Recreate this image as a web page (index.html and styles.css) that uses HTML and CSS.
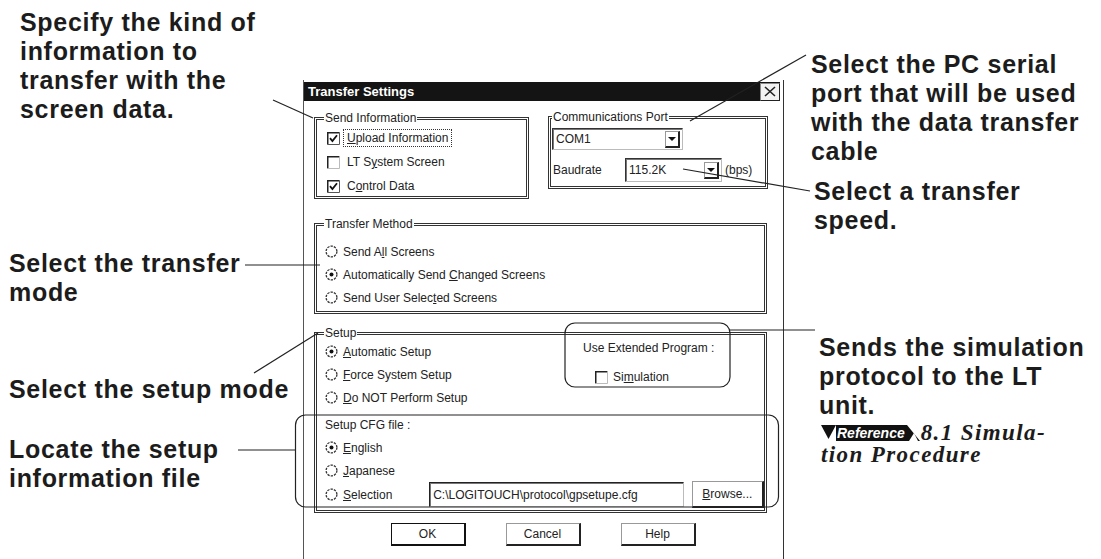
FILE: index.html
```html
<!DOCTYPE html>
<html>
<head>
<meta charset="utf-8">
<link rel="stylesheet" href="styles.css">
</head>
<body>
<div class="figure">
  <div class="col-left">
    <p class="note n-specify">Specify the kind of<br>information to<br>transfer with the<br>screen data.</p>
    <p class="note n-transfer">Select the transfer<br>mode</p>
    <p class="note n-setup">Select the setup mode</p>
    <p class="note n-locate">Locate the setup<br>information file</p>
  </div>

  <div class="dialog">
    <div class="titlebar">
      <span class="title">Transfer Settings</span>
      <span class="close"><svg width="12" height="11" viewBox="0 0 12 11"><path d="M1 1 L11 10 M11 1 L1 10" stroke="#222" stroke-width="1.6"/></svg></span>
    </div>
    <div class="dlg-body">
      <div class="row1">
        <fieldset class="grp grp-send">
          <legend>Send Information</legend>
          <div class="opt cbopt"><span class="cb"><svg width="13" height="13" viewBox="0 0 13 13"><path d="M0.75 12.5 V0.75 H12.5" fill="none" stroke="#222" stroke-width="1.5"/><path d="M12.5 0.5 V12.5 H0.5" fill="none" stroke="#555" stroke-width="1"/><path d="M3 6.2 L5.4 9 L10 3.2" fill="none" stroke="#111" stroke-width="1.8"/></svg></span><span class="lbl focus"><u>U</u>pload Information</span></div>
          <div class="opt cbopt"><span class="cb"><svg width="13" height="13" viewBox="0 0 13 13"><path d="M0.75 12.5 V0.75 H12.5" fill="none" stroke="#222" stroke-width="1.5"/><path d="M12.5 0.5 V12.5 H0.5" fill="none" stroke="#bbb" stroke-width="1"/></svg></span><span class="lbl">LT S<u>y</u>stem Screen</span></div>
          <div class="opt cbopt"><span class="cb"><svg width="13" height="13" viewBox="0 0 13 13"><path d="M0.75 12.5 V0.75 H12.5" fill="none" stroke="#222" stroke-width="1.5"/><path d="M12.5 0.5 V12.5 H0.5" fill="none" stroke="#555" stroke-width="1"/><path d="M3 6.2 L5.4 9 L10 3.2" fill="none" stroke="#111" stroke-width="1.8"/></svg></span><span class="lbl">C<u>o</u>ntrol Data</span></div>
        </fieldset>
        <fieldset class="grp grp-port">
          <legend>Communications Port</legend>
          <div class="combo combo-com"><span class="val">COM1</span><span class="drop"></span></div>
          <div class="baud">
            <span class="baud-label">Baudrate</span>
            <div class="combo combo-baud"><span class="val">115.2K</span><span class="drop"></span></div>
            <span class="bps">(bps)</span>
          </div>
        </fieldset>
      </div>

      <fieldset class="grp grp-method">
        <legend>Transfer Method</legend>
        <div class="opt ropt"><svg class="rd" width="13" height="13" viewBox="0 0 13 13"><circle cx="6.5" cy="6.5" r="5.4" fill="none" stroke="#333" stroke-width="1.3" stroke-dasharray="2.3 1.1"/></svg><span class="lbl">Send A<u>l</u>l Screens</span></div>
        <div class="opt ropt"><svg class="rd" width="13" height="13" viewBox="0 0 13 13"><circle cx="6.5" cy="6.5" r="5.4" fill="none" stroke="#333" stroke-width="1.3" stroke-dasharray="2.3 1.1"/><circle cx="6.5" cy="6.5" r="2" fill="#111"/></svg><span class="lbl">Automatically Send <u>C</u>hanged Screens</span></div>
        <div class="opt ropt"><svg class="rd" width="13" height="13" viewBox="0 0 13 13"><circle cx="6.5" cy="6.5" r="5.4" fill="none" stroke="#333" stroke-width="1.3" stroke-dasharray="2.3 1.1"/></svg><span class="lbl">Send User Selec<u>t</u>ed Screens</span></div>
      </fieldset>

      <fieldset class="grp grp-setup">
        <legend>Setup</legend>
        <div class="setup-top">
          <div class="setup-modes">
            <div class="opt ropt"><svg class="rd" width="13" height="13" viewBox="0 0 13 13"><circle cx="6.5" cy="6.5" r="5.4" fill="none" stroke="#333" stroke-width="1.3" stroke-dasharray="2.3 1.1"/><circle cx="6.5" cy="6.5" r="2" fill="#111"/></svg><span class="lbl"><u>A</u>utomatic Setup</span></div>
            <div class="opt ropt"><svg class="rd" width="13" height="13" viewBox="0 0 13 13"><circle cx="6.5" cy="6.5" r="5.4" fill="none" stroke="#333" stroke-width="1.3" stroke-dasharray="2.3 1.1"/></svg><span class="lbl"><u>F</u>orce System Setup</span></div>
            <div class="opt ropt"><svg class="rd" width="13" height="13" viewBox="0 0 13 13"><circle cx="6.5" cy="6.5" r="5.4" fill="none" stroke="#333" stroke-width="1.3" stroke-dasharray="2.3 1.1"/></svg><span class="lbl"><u>D</u>o NOT Perform Setup</span></div>
          </div>
          <div class="ext">
            <div class="ext-title">Use Extended Program :</div>
            <div class="ext-sim"><span class="cb"><svg width="13" height="13" viewBox="0 0 13 13"><path d="M0.75 12.5 V0.75 H12.5" fill="none" stroke="#222" stroke-width="1.5"/><path d="M12.5 0.5 V12.5 H0.5" fill="none" stroke="#bbb" stroke-width="1"/></svg></span><span class="lbl">Si<u>m</u>ulation</span></div>
          </div>
        </div>
        <div class="cfg-label">Setup CFG file :</div>
        <div class="opt ropt"><svg class="rd" width="13" height="13" viewBox="0 0 13 13"><circle cx="6.5" cy="6.5" r="5.4" fill="none" stroke="#333" stroke-width="1.3" stroke-dasharray="2.3 1.1"/><circle cx="6.5" cy="6.5" r="2" fill="#111"/></svg><span class="lbl"><u>E</u>nglish</span></div>
        <div class="opt ropt"><svg class="rd" width="13" height="13" viewBox="0 0 13 13"><circle cx="6.5" cy="6.5" r="5.4" fill="none" stroke="#333" stroke-width="1.3" stroke-dasharray="2.3 1.1"/></svg><span class="lbl"><u>J</u>apanese</span></div>
        <div class="opt ropt sel-row"><svg class="rd" width="13" height="13" viewBox="0 0 13 13"><circle cx="6.5" cy="6.5" r="5.4" fill="none" stroke="#333" stroke-width="1.3" stroke-dasharray="2.3 1.1"/></svg><span class="lbl sel-lbl"><u>S</u>election</span><span class="field">C:\LOGITOUCH\protocol\gpsetupe.cfg</span><span class="btn btn-browse"><u>B</u>rowse...</span></div>
      </fieldset>

      <div class="buttons">
        <span class="btn btn-default">OK</span>
        <span class="btn">Cancel</span>
        <span class="btn">Help</span>
      </div>
    </div>
  </div>

  <div class="col-right">
    <p class="note n-port">Select the PC serial<br>port that will be used<br>with the data transfer<br>cable</p>
    <p class="note n-speed">Select a transfer<br>speed.</p>
    <p class="note n-sim">Sends the simulation<br>protocol to the LT<br>unit.</p>
    <div class="ref">
      <div class="ref-line">
        <span class="badge"><svg class="badge-l" width="15" height="16" viewBox="0 0 15 16"><polygon points="0,0 15,0 7.5,14" fill="#111"/></svg><span class="badge-mid">Reference</span><svg class="badge-r" width="13" height="16" viewBox="0 0 13 16"><polygon points="0,0 0,16 13,16" fill="#111"/><polygon points="2,16 7,8 11,16" fill="#fff"/></svg></span><span class="ref-text">8.1 Simula-</span>
      </div>
      <div class="ref-text ref-line2">tion Procedure</div>
    </div>
  </div>

  <svg class="leaders" width="1101" height="559" viewBox="0 0 1101 559">
    <g stroke="#222" stroke-width="1.2" fill="none">
      <line x1="273" y1="100" x2="313" y2="118"/>
      <line x1="690" y1="121" x2="806" y2="55"/>
      <line x1="683" y1="169" x2="810" y2="191"/>
      <line x1="245" y1="265" x2="320" y2="265"/>
      <line x1="254" y1="373" x2="318" y2="333"/>
      <line x1="238" y1="450" x2="295" y2="450"/>
      <line x1="730" y1="330" x2="815" y2="330"/>
      <rect x="565" y="323" width="165" height="64" rx="10" ry="10"/>
      <rect x="295.5" y="415" width="483" height="92" rx="10" ry="10"/>
    </g>
  </svg>
</div>
</body>
</html>
```

FILE: styles.css
```css
* { box-sizing: border-box; }

body {
  margin: 0;
  background: #fff;
}

.figure {
  position: relative;
  width: 1101px;
  height: 559px;
  overflow: hidden;
  display: grid;
  grid-template-columns: 303px 481px 317px;
  font-family: "Liberation Sans", Arial, sans-serif;
  color: #1c1c1c;
}

/* ---------- annotations ---------- */
.note {
  margin: 0;
  font-weight: bold;
  font-size: 25px;
  line-height: 29px;
  letter-spacing: 0.7px;
  white-space: nowrap;
}

.col-left,
.col-right {
  display: flex;
  flex-direction: column;
}

.n-specify { margin-top: 8px; padding-left: 20px; }
.n-transfer { margin-top: 125px; padding-left: 9px; }
.n-setup { margin-top: 68px; padding-left: 9px; }
.n-locate { margin-top: 31px; padding-left: 9px; }

.n-port { margin-top: 50px; padding-left: 27px; }
.n-speed { margin-top: 11px; padding-left: 30px; }
.n-sim { margin-top: 98px; padding-left: 35px; }

.ref {
  margin-top: 4px;
  padding-left: 37px;
}

.ref-line {
  display: flex;
  align-items: center;
  height: 18px;
}

.badge {
  display: inline-flex;
  height: 16px;
  margin-right: 1px;
}

.badge-mid {
  background: #111;
  color: #fff;
  font-style: italic;
  font-weight: bold;
  font-size: 14px;
  line-height: 16px;
  padding: 0 2px 0 1px;
}

.ref-text {
  font-family: "Liberation Serif", "Times New Roman", serif;
  font-style: italic;
  font-weight: bold;
  font-size: 23px;
  letter-spacing: 1.4px;
  line-height: 18px;
  white-space: nowrap;
}

.ref-line2 {
  margin-top: 4px;
}

/* ---------- dialog ---------- */
.dialog {
  margin-top: 80px;
  height: 479px;
  border-left: 1px solid #555;
  border-right: 1px solid #333;
  font-size: 12px;
  color: #222;
}

.titlebar {
  height: 19px;
  margin: 2px 3px 0 0;
  background: #141414;
  color: #fff;
  font-weight: bold;
  font-size: 13px;
  display: flex;
  align-items: center;
  justify-content: space-between;
  padding-left: 4px;
}

.close {
  width: 20px;
  height: 18px;
  background: #f2f2f2;
  border: 1px solid #888;
  border-right-color: #222;
  border-bottom-color: #222;
  display: flex;
  align-items: center;
  justify-content: center;
}

.dlg-body {
  padding: 0 15px 0 10px;
}

.row1 {
  display: flex;
  gap: 19px;
  align-items: flex-start;
  margin-top: 9px;
}

.grp {
  margin: 0;
  min-width: 0;
  border: 3px double #333;
  padding: 0;
}

.grp legend {
  padding: 0 1px;
  font-size: 12px;
  line-height: 14px;
}

.grp-send {
  width: 215px;
  height: 88px;
  margin-top: 1px;
  padding: 1px 0 0 7px;
}

.grp-port {
  width: 220px;
  height: 79px;
  padding: 4px 0 0 1px;
}

.grp-method {
  width: 453px;
  height: 97px;
  margin-top: 18px;
  padding: 9px 0 0 7px;
}

.grp-setup {
  width: 453px;
  height: 187px;
  margin-top: 12px;
  padding: 0 0 0 7px;
}

.opt {
  display: flex;
  align-items: center;
  height: 23px;
  white-space: nowrap;
}

.cbopt {
  height: 24px;
  padding-left: 3px;
  gap: 5px;
}

.cbopt .lbl {
  padding: 0 2px;
}

.ropt {
  padding-left: 1px;
  gap: 5px;
}

.cb {
  display: inline-flex;
  width: 13px;
  height: 13px;
}

.rd {
  flex: none;
}

.focus {
  outline: 1px dotted #333;
  outline-offset: 1px;
}

/* combos */
.combo {
  display: flex;
  align-items: center;
  background: #fff;
  border: 1px solid #333;
  border-right-color: #bbb;
  border-bottom-color: #bbb;
  box-shadow: inset 1px 1px 0 #777;
  padding: 0 2px 0 3px;
}

.combo .val {
  flex: 1;
}

.combo-com {
  width: 131px;
  height: 22px;
}

.baud {
  display: flex;
  align-items: center;
  margin-top: 8px;
  height: 24px;
}

.baud-label {
  width: 73px;
  padding-left: 1px;
}

.combo-baud {
  width: 97px;
  height: 24px;
}

.bps {
  margin-left: 3px;
}

.drop {
  width: 15px;
  height: 17px;
  border: 1px solid #999;
  border-right: 2px solid #222;
  border-bottom: 2px solid #222;
  display: flex;
  align-items: center;
  justify-content: center;
}

.drop::after {
  content: "";
  border-left: 4px solid transparent;
  border-right: 4px solid transparent;
  border-top: 4px solid #111;
}

/* setup */
.setup-top {
  display: flex;
}

.setup-modes {
  width: 259px;
}

.ext-title {
  height: 14px;
  line-height: 14px;
  margin-top: 1px;
}

.ext-sim {
  display: flex;
  align-items: center;
  gap: 5px;
  margin-top: 15px;
  padding-left: 12px;
  height: 14px;
}

.cfg-label {
  height: 22px;
  display: flex;
  align-items: center;
  margin-top: 5px;
  padding-left: 1px;
}

.sel-row {
  height: 25px;
}

.sel-lbl {
  width: 82px;
}

.field {
  width: 257px;
  height: 25px;
  display: flex;
  align-items: center;
  padding-left: 3px;
  border: 1px solid #222;
  border-right-color: #bbb;
  border-bottom-color: #bbb;
  box-shadow: inset 1px 1px 0 #777;
}

.btn {
  display: flex;
  align-items: center;
  justify-content: center;
  border: 1px solid #999;
  border-right: 2px solid #222;
  border-bottom: 2px solid #222;
  background: #fff;
}

.btn-browse {
  width: 73px;
  height: 27px;
  margin-left: 3px;
}

.buttons {
  display: flex;
  justify-content: center;
  gap: 40px;
  margin-top: 10px;
  padding-left: 4px;
}

.buttons .btn {
  width: 75px;
  height: 23px;
}

.buttons .btn-default {
  border: 1px solid #111;
  border-right: 2px solid #111;
  border-bottom: 2px solid #111;
}

/* overlay leader lines */
.leaders {
  position: absolute;
  left: 0;
  top: 0;
  pointer-events: none;
}
```
